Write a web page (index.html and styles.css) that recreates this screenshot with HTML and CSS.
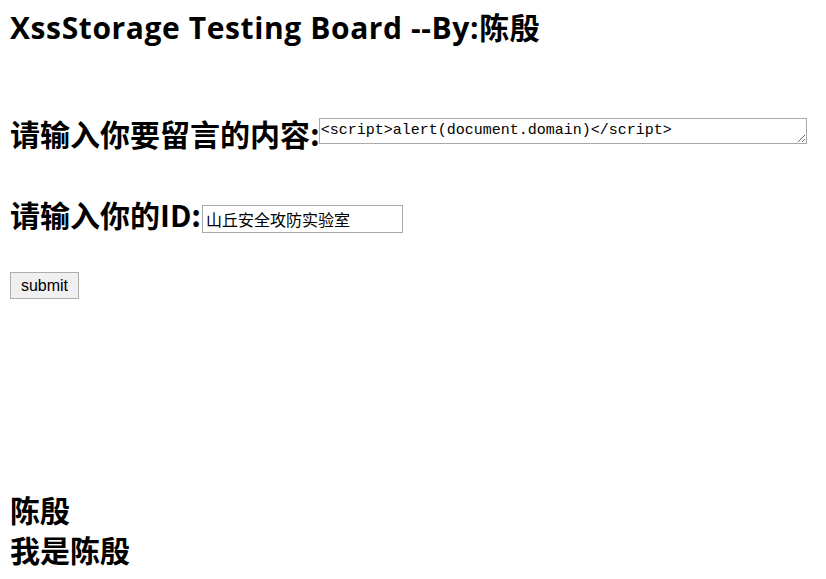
FILE: index.html
```html
<!DOCTYPE html>
<html>
<head>
<meta charset="utf-8">
<title>XssStorage</title>
<link rel="stylesheet" href="styles.css">
</head>
<body>
<h2 class="title">XssStorage Testing Board --By:陈殷</h2>
<form class="board">
  <h2 class="field field-msg">请输入你要留言的内容:<textarea class="msg">&lt;script&gt;alert(document.domain)&lt;/script&gt;</textarea></h2>
  <h2 class="field field-id">请输入你的ID:<input class="uid" type="text" value="山丘安全攻防实验室"></h2>
  <button class="submit" type="button">submit</button>
</form>
<div class="messages">
  <h2 class="entry">陈殷</h2>
  <h2 class="entry">我是陈殷</h2>
</div>
</body>
</html>
```
FILE: styles.css
```css
html, body {
  margin: 0;
  padding: 0;
  background: #fff;
  color: #000;
}
body {
  padding: 0 10px;
  font-family: "Open Sans", "Noto Sans CJK SC", sans-serif;
}
h2 {
  font-size: 30px;
  font-weight: bold;
  margin: 0;
  line-height: 40px;
}
.title {
  padding-top: 8px;
  letter-spacing: 0.6px;
}
.board {
  margin-top: 65px;
}
.field {
  display: flex;
  align-items: flex-end;
  font-family: "Noto Sans CJK SC", sans-serif;
}
.field-id {
  margin-top: 41px;
}
.msg {
  width: 488px;
  height: 26px;
  box-sizing: border-box;
  border: 1px solid #a9a9a9;
  padding: 2px 1px 0;
  margin: 0 0 9px -1px;
  font-family: "Liberation Mono", monospace;
  font-size: 15px;
  line-height: 20px;
  resize: vertical;
  overflow: hidden;
}
.uid {
  width: 201px;
  height: 28px;
  box-sizing: border-box;
  border: 1px solid #a9a9a9;
  padding: 0 3px;
  margin: 0 0 1px 1px;
  font-family: "Noto Sans CJK SC", sans-serif;
  font-size: 16px;
}
.submit {
  margin-top: 38px;
  width: 69px;
  height: 27px;
  font-family: "Liberation Sans", Arial, sans-serif;
  font-size: 16px;
  color: #000;
  background: #f0f0f0;
  border: 1px solid #adadad;
  border-radius: 0;
  padding: 0;
}
.messages {
  margin-top: 190px;
}
.entry {
  font-family: "Noto Sans CJK SC", sans-serif;
}
```
